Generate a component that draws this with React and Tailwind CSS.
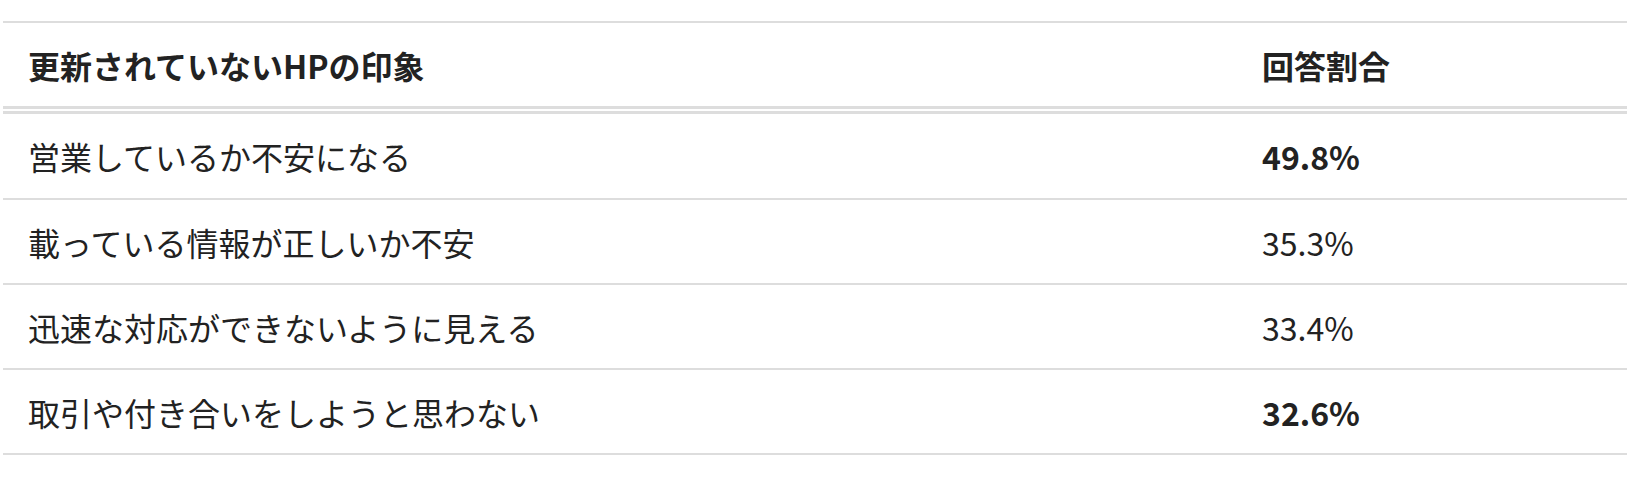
import React from "react";

const rows = [
  { label: "営業しているか不安になる", value: "49.8%", strong: true },
  { label: "載っている情報が正しいか不安", value: "35.3%", strong: false },
  { label: "迅速な対応ができないように見える", value: "33.4%", strong: false },
  { label: "取引や付き合いをしようと思わない", value: "32.6%", strong: true },
];

export default function App() {
  return (
    <div
      className="w-full min-h-[480px] bg-white pt-[21px] pl-[3px] text-[#222222]"
      style={{ fontFamily: '"Noto Sans CJK JP", "Noto Sans", sans-serif' }}
    >
      <div className="w-[1624px]">
        {/* header */}
        <div className="grid grid-cols-[1234px_1fr] border-t-2 border-b-[3px] border-[#dddddd]">
          <div className="h-[83px] flex items-center pl-[25px] text-[32px] font-bold leading-none">
            更新されていないHPの印象
          </div>
          <div className="h-[83px] flex items-center pl-[25px] text-[32px] font-bold leading-none">
            回答割合
          </div>
        </div>
        <div className="h-[2px]" />
        <div className="border-t-[3px] border-[#dddddd]">
          {rows.map((row, i) => (
            <div
              key={i}
              className="grid grid-cols-[1234px_1fr] border-b-2 border-[#dddddd]"
            >
              <div
                className={
                  i === 0
                    ? "h-[84px] flex items-center pl-[25px] text-[32px] leading-none"
                    : "h-[83px] flex items-center pl-[25px] text-[32px] leading-none"
                }
              >
                {row.label}
              </div>
              <div
                className={
                  row.strong
                    ? "flex items-center pl-[25px] text-[32px] font-bold leading-none"
                    : "flex items-center pl-[25px] text-[32px] leading-none"
                }
              >
                {row.value}
              </div>
            </div>
          ))}
        </div>
      </div>
    </div>
  );
}
